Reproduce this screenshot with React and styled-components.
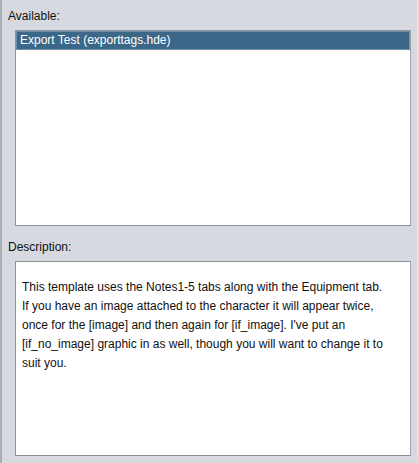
import React from "react";
import styled, { createGlobalStyle } from "styled-components";

const Global = createGlobalStyle`
  html, body { margin: 0; padding: 0; background: #d6d9e0; }
  body { font-family: "Liberation Sans", Arial, sans-serif; }
`;

const Panel = styled.div`
  box-sizing: border-box;
  width: 418px;
  height: 463px;
  background: #d6d9e0;
  border-left: 2px solid #a9adb5;
  border-right: 1px solid #e4e6eb;
  padding: 9px 7px 0 6px;
  display: flex;
  flex-direction: column;
`;

const Label = styled.div`
  font-size: 12px;
  line-height: 14px;
  height: 14px;
  color: #111;
  margin-top: ${(p) => p.$top || 0}px;
`;

const Box = styled.div`
  box-sizing: border-box;
  margin-left: 7px;
  margin-top: 7px;
  width: 396px;
  height: ${(p) => p.$h}px;
  background: #fff;
  border: 1px solid #8e9198;
  border-right-color: #a0a3a9;
  border-bottom-color: #8a8d93;
`;

const Row = styled.div`
  height: 19px;
  line-height: 19px;
  font-size: 12px;
  padding-left: 4px;
  color: ${(p) => (p.$selected ? "#fff" : "#111")};
  background: ${(p) => (p.$selected ? "#3b6889" : "transparent")};
  box-shadow: ${(p) => (p.$selected ? "inset 0 0 0 1px #6f8fab" : "none")};
`;

const Desc = styled.div`
  padding: 16px 8px 0 6px;
  font-size: 12px;
  line-height: 19px;
  color: #111;
`;

export default function App() {
  return (
    <>
      <Global />
      <Panel>
        <Label>Available:</Label>
        <Box $h={196}>
          <Row $selected>Export Test (exporttags.hde)</Row>
        </Box>
        <Label $top={14}>Description:</Label>
        <Box $h={195}>
          <Desc>
            This template uses the Notes1-5 tabs along with the Equipment tab.
            <br />
            If you have an image attached to the character it will appear twice,
            <br />
            once for the [image] and then again for [if_image]. I've put an
            <br />
            [if_no_image] graphic in as well, though you will want to change it to
            <br />
            suit you.
          </Desc>
        </Box>
      </Panel>
    </>
  );
}
